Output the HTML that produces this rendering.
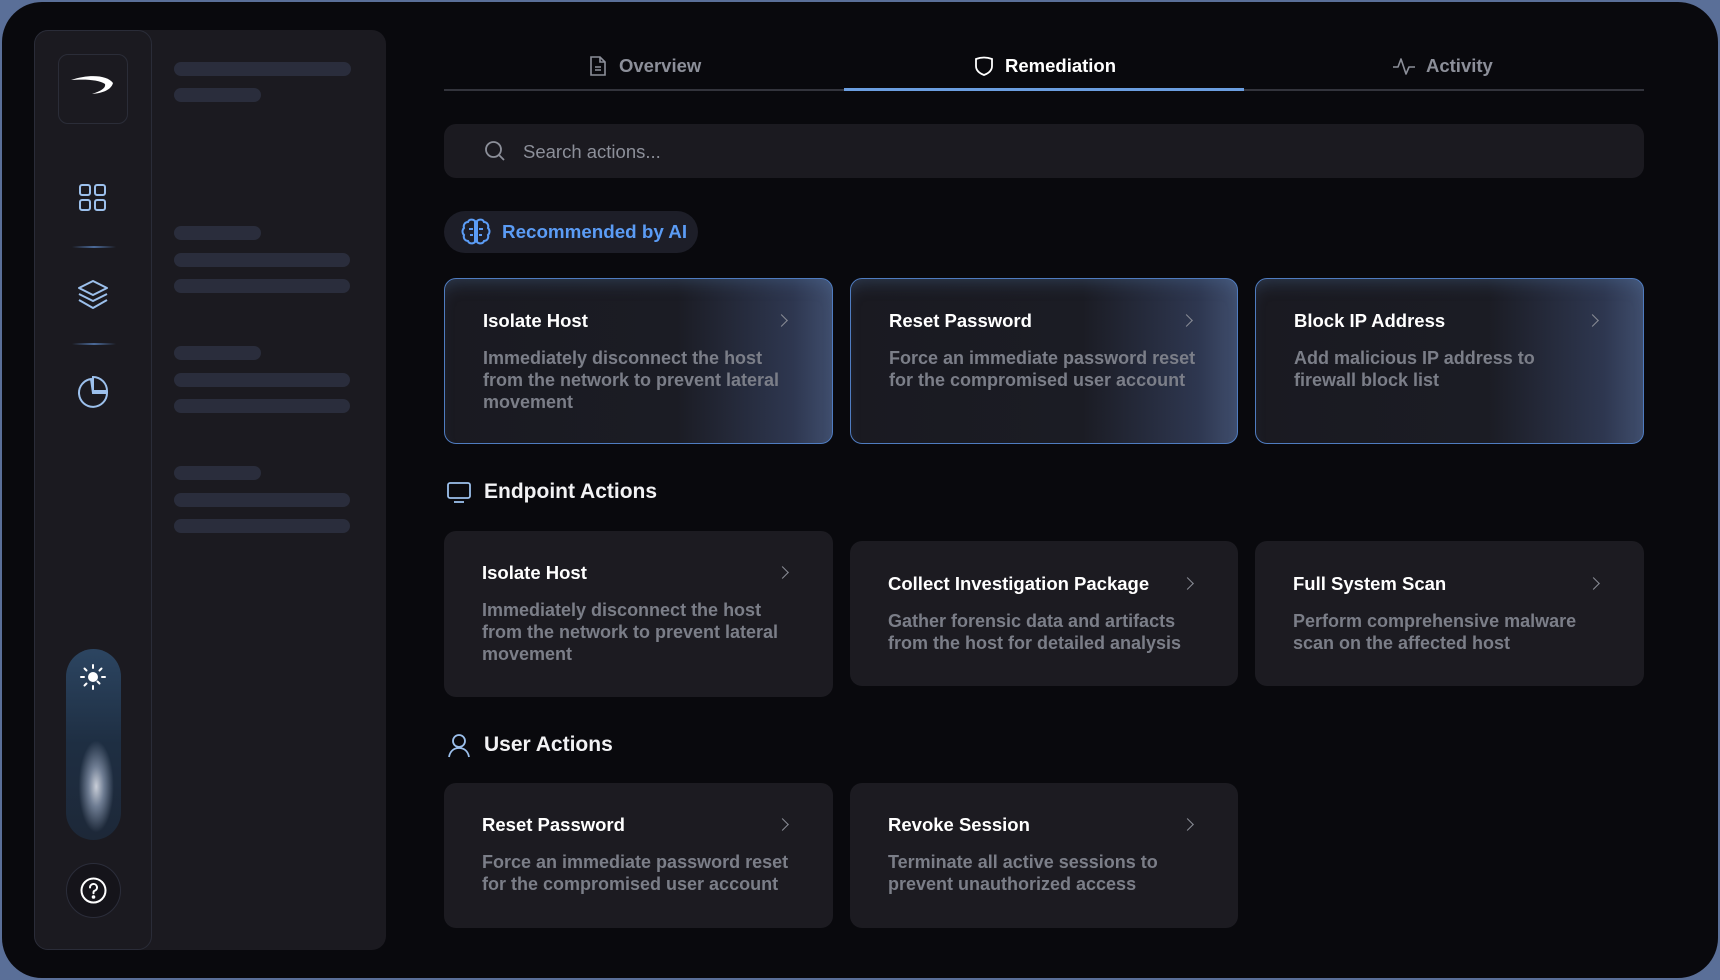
<!DOCTYPE html>
<html><head><meta charset="utf-8"><style>
*{box-sizing:border-box;margin:0;padding:0}
body{width:1720px;height:980px;background:#5a6f98;font-family:"Liberation Sans",sans-serif;overflow:hidden;position:relative}
.frame{position:absolute;left:2px;top:2px;width:1716px;height:976px;border-radius:40px;background:#09090d}
.abs{position:absolute}
.panel{left:34px;top:30px;width:352px;height:920px;background:#1b1a20;border-radius:14px}
.rail{left:34px;top:30px;width:118px;height:920px;border:1px solid #2a2c38;border-radius:14px;background:#1b1a20}
.logo{left:58px;top:54px;width:70px;height:70px;border:1px solid #2b2d38;border-radius:10px}
.bar{position:absolute;height:14px;border-radius:7px;background:#2a2d3c;left:174px}
.div{position:absolute;left:72px;width:44px;height:2px;background:linear-gradient(90deg,transparent,#4b6a99,transparent)}
.tab{position:absolute;top:55px;font-size:18.5px;font-weight:bold;color:#8c8f99;display:flex;align-items:center;gap:10px}
.card{position:absolute;background:#1c1b21;border-radius:12px;padding:0 39px 0 38px}
.rec{border:1.5px solid #4f7cc0;background:linear-gradient(90deg,#1a1a21 0%,#1b1c24 60%,#2e3750 90%,#3f4d6c 100%);box-shadow:inset 0 12px 18px -10px rgba(90,130,180,.35)}
.card h3{font-size:18.5px;font-weight:bold;color:#fff;margin-bottom:15px}
.card p{font-size:18px;font-weight:bold;color:#7b7e88;line-height:22px;max-width:312px}
.chev{position:absolute;right:46px;width:9px;height:9px;border-right:1.5px solid #8a8d96;border-top:1.5px solid #8a8d96;transform:rotate(45deg)}
.sec{position:absolute;left:446px;display:flex;align-items:center;gap:12px;font-size:21px;font-weight:bold;color:#f2f2f4}
</style></head><body>
<div class="frame"></div>
<div class="abs panel"></div>
<div class="abs rail"></div>
<div class="abs logo"><svg width="70" height="70"><path d="M12 25 C30 19 48 20 54 28 C52 35 44 38 33 39 C42 36 47 33 46 29 C40 25 28 24 12 25Z" fill="#fff"/></svg></div>
<svg class="abs" style="left:78px;top:183px" width="30" height="30" fill="none" stroke="#9cc0ec" stroke-width="2"><rect x="2" y="2" width="10" height="10" rx="2"/><rect x="17" y="2" width="10" height="10" rx="2"/><rect x="2" y="17" width="10" height="10" rx="2"/><rect x="17" y="17" width="10" height="10" rx="2"/></svg>
<div class="div" style="top:246px"></div>
<svg class="abs" style="left:76px;top:278px" width="34" height="34" fill="none" stroke="#9cc0ec" stroke-width="2" stroke-linejoin="round"><path d="M17 3 L31 10 L17 17 L3 10Z"/><path d="M3 16 L17 23 L31 16"/><path d="M3 22 L17 30 L31 22"/></svg>
<div class="div" style="top:343px"></div>
<svg class="abs" style="left:77px;top:375px" width="34" height="34" fill="none" stroke="#9cc0ec" stroke-width="2"><path d="M14 4 A14 14 0 1 0 30 18 L16 18Z" /><path d="M16 2 A14 14 0 0 1 30 16 L16 16Z"/></svg>
<div class="bar" style="top:62px;width:177px"></div><div class="bar" style="top:88px;width:87px"></div>
<div class="bar" style="top:226px;width:87px"></div><div class="bar" style="top:253px;width:176px"></div><div class="bar" style="top:279px;width:176px"></div>
<div class="bar" style="top:346px;width:87px"></div><div class="bar" style="top:373px;width:176px"></div><div class="bar" style="top:399px;width:176px"></div>
<div class="bar" style="top:466px;width:87px"></div><div class="bar" style="top:493px;width:176px"></div><div class="bar" style="top:519px;width:176px"></div>
<div class="abs" style="left:66px;top:649px;width:55px;height:191px;border-radius:28px;background:radial-gradient(ellipse 40% 30% at 55% 72%,#c9ced8 0%,#6f7d93 35%,transparent 80%),linear-gradient(180deg,#2c4561,#1e2e42 50%,#1d2838)"></div>
<svg class="abs" style="left:79px;top:663px" width="28" height="28" fill="#fff" stroke="#fff" stroke-width="2" stroke-linecap="round"><circle cx="14" cy="14" r="5" stroke="none"/><path d="M14 2v3M14 23v3M2 14h3M23 14h3M5.5 5.5l2 2M20.5 20.5l-2-2M5.5 22.5l2-2M22.5 5.5l-2 2"/></svg>
<div class="abs" style="left:66px;top:863px;width:55px;height:55px;border-radius:50%;border:1px solid #2b2d3a;background:#15141a"></div>
<svg class="abs" style="left:80px;top:877px" width="27" height="27" fill="none" stroke="#fff" stroke-width="2"><circle cx="13.5" cy="13.5" r="12"/><path d="M10 10.5a3.5 3.5 0 1 1 4.5 3.3c-.8.3-1 .9-1 1.7v.8" stroke-linecap="round"/><circle cx="13.5" cy="20" r=".8" fill="#fff"/></svg>

<div class="abs" style="left:444px;top:89px;width:1200px;height:2px;background:#33343c"></div>
<div class="abs" style="left:844px;top:88px;width:400px;height:3px;background:#6b9ee0"></div>
<div class="tab" style="left:587px"><svg width="22" height="22" fill="none" stroke="#8c8f99" stroke-width="1.6"><path d="M4 2h9l5 5v13H4Z"/><path d="M13 2v5h5M8 12h6M8 15h6"/></svg>Overview</div>
<div class="tab" style="left:973px;color:#fff"><svg width="22" height="22" fill="none" stroke="#fff" stroke-width="1.8"><path d="M3 4 Q11 1 19 4 V11 Q19 17 11 20 Q3 17 3 11Z"/></svg>Remediation</div>
<div class="tab" style="left:1392px"><svg width="24" height="22" fill="none" stroke="#8c8f99" stroke-width="1.6" stroke-linejoin="round"><path d="M1 12h5l3-8 5 15 3-7h6"/></svg>Activity</div>

<div class="abs" style="left:444px;top:124px;width:1200px;height:54px;border-radius:12px;background:#1b1a20"></div>
<svg class="abs" style="left:484px;top:140px" width="22" height="22" fill="none" stroke="#8c8f99" stroke-width="1.8"><circle cx="9.5" cy="9.5" r="7.5"/><path d="M15 15l5 5"/></svg>
<div class="abs" style="left:523px;top:141px;font-size:18.5px;color:#8c8f99">Search actions...</div>

<div class="abs" style="left:444px;top:211px;width:254px;height:42px;border-radius:21px;background:#1d1e28"></div>
<svg class="abs" style="left:460px;top:216px" width="32" height="32" fill="none" stroke="#5b9cf5" stroke-width="2"><path d="M15 5c-2-2-6-2-7 1-3 0-5 3-4 6-2 2-2 5 0 7-1 3 1 6 4 6 1 3 5 3 7 1V5Z"/><path d="M17 5c2-2 6-2 7 1 3 0 5 3 4 6 2 2 2 5 0 7 1 3-1 6-4 6-1 3-5 3-7 1V5Z"/><path d="M9 13h4M19 13h4M10 19h3M19 19h3"/></svg>
<div class="abs" style="left:502px;top:221px;font-size:18.8px;font-weight:bold;color:#5b9cf5">Recommended by AI</div>

<div class="card rec" style="left:444px;top:278px;width:389px;height:166px;padding-top:31px"><h3>Isolate Host</h3><p>Immediately disconnect the host from the network to prevent lateral movement</p><i class="chev" style="top:37px"></i></div>
<div class="card rec" style="left:850px;top:278px;width:388px;height:166px;padding-top:31px"><h3>Reset Password</h3><p>Force an immediate password reset for the compromised user account</p><i class="chev" style="top:37px"></i></div>
<div class="card rec" style="left:1255px;top:278px;width:389px;height:166px;padding-top:31px"><h3>Block IP Address</h3><p style="max-width:260px">Add malicious IP address to firewall block list</p><i class="chev" style="top:37px"></i></div>

<div class="sec" style="top:480px"><svg width="26" height="24" fill="none" stroke="#9cc0ec" stroke-width="1.8"><rect x="2" y="3" width="22" height="15" rx="2"/><path d="M8 22h10"/></svg>Endpoint Actions</div>
<div class="card" style="left:444px;top:531px;width:389px;height:166px;padding-top:31px"><h3>Isolate Host</h3><p>Immediately disconnect the host from the network to prevent lateral movement</p><i class="chev" style="top:37px"></i></div>
<div class="card" style="left:850px;top:541px;width:388px;height:145px;padding-top:32px"><h3>Collect Investigation Package</h3><p>Gather forensic data and artifacts from the host for detailed analysis</p><i class="chev" style="top:38px"></i></div>
<div class="card" style="left:1255px;top:541px;width:389px;height:145px;padding-top:32px"><h3>Full System Scan</h3><p>Perform comprehensive malware scan on the affected host</p><i class="chev" style="top:38px"></i></div>

<div class="sec" style="top:732px"><svg width="26" height="26" fill="none" stroke="#9cc0ec" stroke-width="1.8"><circle cx="13" cy="9" r="6"/><path d="M3 25c1-6 5-9 10-9s9 3 10 9"/></svg>User Actions</div>
<div class="card" style="left:444px;top:783px;width:389px;height:145px;padding-top:31px"><h3>Reset Password</h3><p>Force an immediate password reset for the compromised user account</p><i class="chev" style="top:37px"></i></div>
<div class="card" style="left:850px;top:783px;width:388px;height:145px;padding-top:31px"><h3>Revoke Session</h3><p>Terminate all active sessions to prevent unauthorized access</p><i class="chev" style="top:37px"></i></div>
</body></html>
